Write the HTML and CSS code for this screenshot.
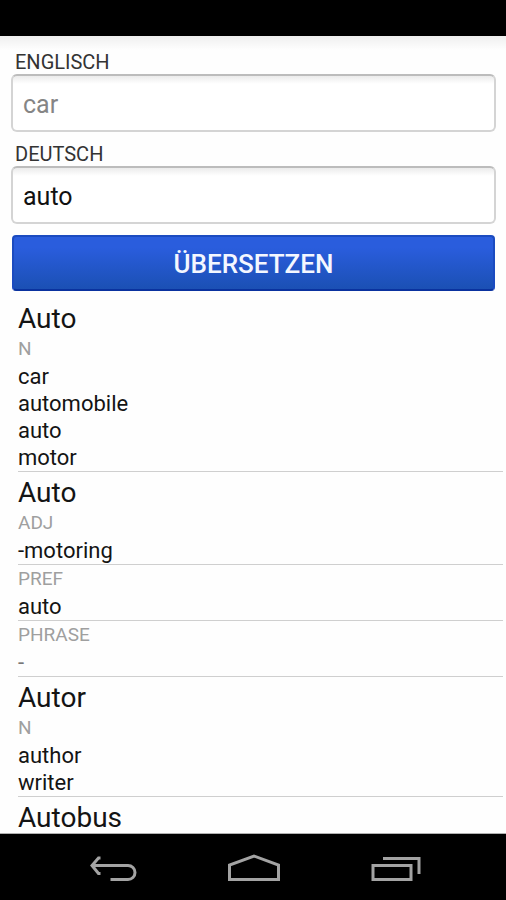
FILE: index.html
```html
<!DOCTYPE html>
<html lang="de">
<head>
<meta charset="utf-8">
<meta name="viewport" content="width=device-width, initial-scale=1">
<title>Übersetzen</title>
<link rel="stylesheet" href="styles.css">
</head>
<body>
<div class="status-bar"></div>
<main class="content">
  <form class="translate-form">
    <label class="field-label" for="english">ENGLISCH</label>
    <input class="field" id="english" type="text" placeholder="car">
    <label class="field-label" for="german">DEUTSCH</label>
    <input class="field" id="german" type="text" value="auto">
    <button class="submit" type="button">ÜBERSETZEN</button>
  </form>
  <div class="results">
    <section class="entry">
      <h2 class="headword">Auto</h2>
      <div class="sense">
        <h3 class="part">N</h3>
        <ul class="words"><li>car</li><li>automobile</li><li>auto</li><li>motor</li></ul>
      </div>
    </section>
    <section class="entry">
      <h2 class="headword">Auto</h2>
      <div class="sense">
        <h3 class="part">ADJ</h3>
        <ul class="words"><li>-motoring</li></ul>
      </div>
      <div class="sense">
        <h3 class="part">PREF</h3>
        <ul class="words"><li>auto</li></ul>
      </div>
      <div class="sense">
        <h3 class="part">PHRASE</h3>
        <ul class="words words-empty"><li>-</li></ul>
      </div>
    </section>
    <section class="entry">
      <h2 class="headword">Autor</h2>
      <div class="sense">
        <h3 class="part">N</h3>
        <ul class="words"><li>author</li><li>writer</li></ul>
      </div>
    </section>
    <section class="entry">
      <h2 class="headword">Autobus</h2>
    </section>
  </div>
</main>
<nav class="nav-bar">
  <button class="nav-button" type="button" aria-label="Zurück">
    <svg width="50" height="32" viewBox="0 0 50 32" fill="none" stroke="#a3a3a3" stroke-width="3">
      <path d="M12.500 5h-2L4 12.500 10.500 20.500h2M4 12.500h36a7 7 0 0 1 0 14H22.500" />
    </svg>
  </button>
  <button class="nav-button" type="button" aria-label="Startseite">
    <svg width="54" height="32" viewBox="0 0 54 32" fill="none" stroke="#a3a3a3" stroke-width="3">
      <path d="M2.500 26.500V12L27 3 51.500 12V26.500Z" />
    </svg>
  </button>
  <button class="nav-button" type="button" aria-label="Letzte Apps">
    <svg width="50" height="32" viewBox="0 0 50 32" fill="none" stroke="#a3a3a3" stroke-width="3">
      <path d="M2 12.500h38v14H2ZM12 5.500h36V21" />
    </svg>
  </button>
</nav>
</body>
</html>
```
FILE: styles.css
```css
* {
  box-sizing: border-box;
}

body {
  display: flex;
  flex-direction: column;
  height: 100vh;
  margin: 0;
  overflow: hidden;
  background: #000;
  color: #141414;
  font-family: Roboto, "Liberation Sans", sans-serif;
}

.status-bar {
  flex: none;
  height: 36px;
}

.content {
  flex: 1;
  min-height: 0;
  overflow: hidden;
  border-bottom: 1px solid #b0b0b0;
  background: linear-gradient(#efefef, #fefefe 14px);
}

.translate-form {
  display: flex;
  flex-direction: column;
  padding: 14px 10px 7px 11px;
}

.field-label {
  padding-left: 4px;
  color: #333;
  font-size: 20px;
  line-height: 24px;
}

.field {
  width: 100%;
  height: 58px;
  margin-bottom: 10px;
  padding: 2px 10px 0;
  border: 2px solid #d4d4d4;
  border-top-color: #bcbcbc;
  border-radius: 6px;
  background: linear-gradient(#ebebeb, #fff 8px);
  color: #111;
  font-family: inherit;
  font-size: 25px;
  outline: none;
}

.field::placeholder {
  color: #858585;
  opacity: 1;
}

.submit {
  height: 56px;
  margin: 1px 1px 0;
  padding: 2px 0 0;
  border: 2px solid #1b4bc0;
  border-bottom-color: #0a329f;
  border-radius: 4px;
  background: linear-gradient(#2a5ddd 20%, #1b50b4);
  color: #f4f7ff;
  font-family: inherit;
  font-size: 26px;
  font-weight: 500;
}

.results {
  padding: 0 3px 0 18px;
}

.headword {
  margin: 0;
  padding-top: 5px;
  font-size: 28px;
  font-weight: 400;
  line-height: 32px;
}

.sense {
  border-bottom: 1px solid #cfcfcf;
}

.part {
  margin: 0;
  color: #9f9f9f;
  font-size: 19px;
  font-weight: 400;
  line-height: 28px;
}

.words {
  margin: 0;
  padding: 0;
  list-style: none;
  font-size: 22px;
  line-height: 27px;
}

.words-empty {
  color: #777;
}

.nav-bar {
  display: grid;
  flex: none;
  grid-template-columns: repeat(3, 1fr);
  height: 66px;
  padding: 4px 39px 0 42px;
}

.nav-button {
  display: flex;
  align-items: center;
  justify-content: center;
  padding: 0;
  border: 0;
  background: none;
}
```
